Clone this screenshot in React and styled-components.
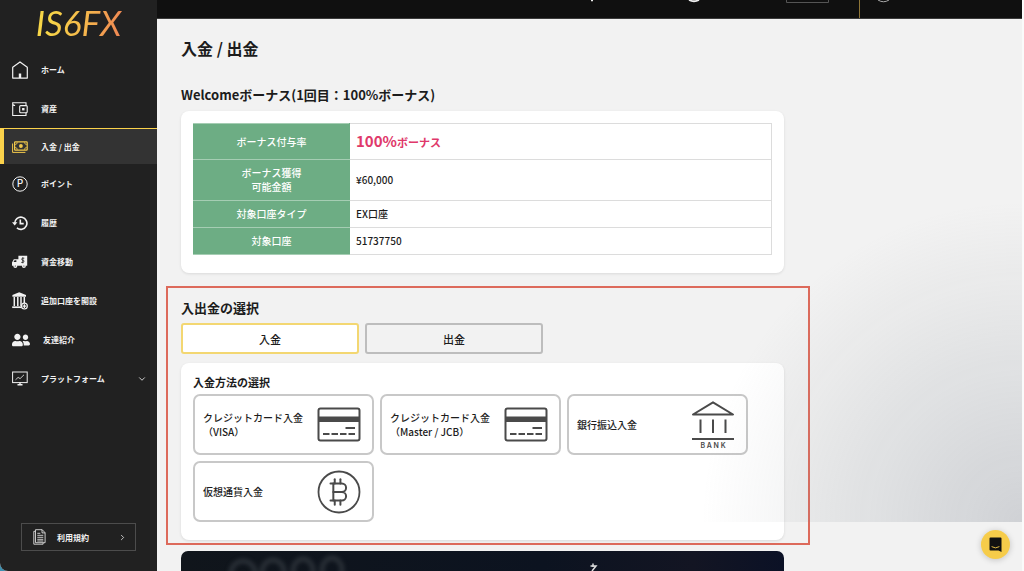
import React, { useState } from 'react'
import styled, { createGlobalStyle } from 'styled-components'
import { FaUserFriends } from 'react-icons/fa'
import { TbCurrencyBitcoin } from 'react-icons/tb'
import { ChevronDown, ChevronRight } from 'lucide-react'

const GlobalStyle = createGlobalStyle`
  * {
    box-sizing: border-box;
  }

  body {
    margin: 0;
    background: #3d8fb0;
    color: #1c1c1c;
    font-family: 'Noto Sans CJK JP', 'Noto Sans', sans-serif;
    font-size: 10px;
    line-height: 14px;
  }

  button {
    font-family: inherit;
    color: inherit;
    cursor: pointer;
  }
`

const Page = styled.div`
  display: flex;
  height: 100vh;
  overflow: hidden;
  border-bottom-left-radius: 8px;
  background: #f2f2f2;
`

const Sidebar = styled.aside`
  display: flex;
  flex-direction: column;
  flex: 0 0 157px;
  padding-bottom: 20px;
  background: #212121;
  color: #f2f2f2;
`

const Logo = styled.a`
  align-self: center;
  height: 50px;
  padding: 0 4px;
  font-family: Lato, sans-serif;
  font-size: 35px;
  font-style: italic;
  font-weight: 400;
  line-height: 44px;
  text-decoration: none;
  color: transparent;
  background: linear-gradient(100deg, #f7d648 20%, #f5b84c 55%, #ee7d55 100%);
  background-clip: text;
`

const NavLink = styled.a`
  display: flex;
  align-items: center;
  gap: 13px;
  height: ${ props => props.$active ? '36px' : '39px' };
  padding: 0 10px 0 ${ props => props.$active ? '8px' : '12px' };
  border: 0 solid #fbd24b;
  border-width: ${ props => props.$active ? '1px 0 0 4px' : '0' };
  background: ${ props => props.$active ? '#333' : 'transparent' };
  color: inherit;
  font-size: 8px;
  font-weight: 700;
  text-decoration: none;

  svg {
    flex: none;
  }
`

const NavText = styled.span`
  flex: 1;
`

const TermsButton = styled.button`
  display: flex;
  align-items: center;
  gap: 11px;
  height: 28px;
  margin: auto 21px 0;
  padding: 0 8px 0 11px;
  border: 1px solid #4c4c4c;
  background: transparent;
  color: #f2f2f2;
  font-size: 8px;
  font-weight: 700;
`

const TermsText = styled.span`
  flex: 1;
  text-align: left;
`

const Main = styled.main`
  flex: 1;
  min-width: 0;
  border-right: 2px solid #fafafa;
`

const TopBar = styled.header`
  display: flex;
  justify-content: flex-end;
  height: 19px;
  background: #101010;
  border-bottom: 1px solid #3c3c3c;

  svg {
    display: block;
  }
`

const Account = styled.div`
  width: 163px;
  border-left: 1px solid #8f7638;
`

const Content = styled.div`
  max-width: 651px;
  padding: 17px 24px 0;
`

const PageTitle = styled.h1`
  margin: 0 0 25px;
  font-size: 16px;
  line-height: 24px;
`

const SectionTitle = styled.h2`
  margin: 0 0 ${ props => props.$tight ? '5px' : '6px' };
  font-size: 13px;
  line-height: 20px;
`

const CardTitle = styled.h3`
  margin: 0 0 4px;
  font-size: 11px;
  line-height: 15px;
`

const Card = styled.div`
  padding: 12px 12px 18px;
  border-radius: 8px;
  background: #fff;
  box-shadow: 0 1px 3px rgba(0, 0, 0, 0.1);
`

const BonusTable = styled.table`
  width: 100%;
  border-collapse: collapse;

  th,
  td {
    padding: 6px;
    border: 1px solid #dcdcdc;
  }

  th {
    width: 156px;
    border-color: #a5cdb3 #6dad84;
    background: #6dad84;
    color: #fff;
    font-weight: 500;
  }

  td {
    font-weight: 500;
  }
`

const Rate = styled.strong`
  display: flex;
  align-items: baseline;
  color: #e0386a;
  font-size: 11px;
  line-height: 21px;
`

const RateNumber = styled.span`
  font-size: 15px;
`

const Highlight = styled.section`
  margin: 13px -26px 6px -15px;
  padding: 10px 24px 3px 13px;
  border: 2px solid #dd6a5b;
`

const Tabs = styled.div`
  display: flex;
  gap: 6px;
  margin-bottom: 9px;
`

const Tab = styled.button`
  width: 178px;
  height: 31px;
  padding: 0;
  border: 2px solid ${ props => props.$selected ? '#f3d772' : '#bdbdbd' };
  border-radius: 3px;
  background: ${ props => props.$selected ? '#fff' : '#f2f2f2' };
  font-size: 11px;
  font-weight: 500;
`

const Methods = styled.div`
  display: flex;
  flex-wrap: wrap;
  gap: 6px;
`

const Method = styled.button`
  display: flex;
  align-items: center;
  justify-content: space-between;
  width: 181px;
  height: 61px;
  padding: 0 11px 0 8px;
  border: 2px solid #c8c8c8;
  border-radius: 7px;
  background: transparent;
  font-size: 10px;
  font-weight: 500;
  line-height: 14px;
  text-align: left;
  white-space: pre-line;
`

const Banner = styled.div`
  height: 120px;
  border-radius: 7px;
  background: linear-gradient(90deg, #10151b, #0c1320 60%, #131523 85%, #0b1126);
`

const Shade = styled.div`
  position: fixed;
  right: 2px;
  bottom: 49px;
  width: 320px;
  height: 320px;
  background: radial-gradient(
    farthest-side at bottom right,
    rgba(110, 118, 132, 0.26),
    rgba(120, 130, 140, 0.14) 50%,
    rgba(140, 146, 150, 0.08) 75%,
    rgba(140, 146, 150, 0)
  );
  pointer-events: none;
`

const ChatButton = styled.button`
  position: fixed;
  right: 14px;
  bottom: 12px;
  display: flex;
  align-items: center;
  justify-content: center;
  width: 29px;
  height: 29px;
  padding: 0;
  border: 0;
  border-radius: 50%;
  background: #f6cc4a;
  box-shadow: 0 1px 6px rgba(0, 0, 0, 0.2);
`

const HomeIcon = () => (
  <svg width="16" height="18" viewBox="0 0 16 18" fill="none" stroke="currentColor" strokeWidth="1.2">
    <path d="M.7 6.2 8 .9l7.3 5.3v10.900H.7z" strokeLinejoin="round" />
    <path d="M8 17v-4.500" strokeWidth="2.400" />
  </svg>
)

const WalletIcon = () => (
  <svg width="16" height="16" viewBox="0 0 16 16" fill="none" stroke="currentColor" strokeWidth="1.100">
    <path d="M14 4.600V1.700H.7v12.800H14v-2.700M.7 2.200c0 1.600.9 2.300 2.400 2.300" />
    <rect x="7.700" y="4.600" width="7.500" height="7.200" rx="1" />
    <rect x="10.100" y="7" width="2.400" height="2.400" fill="currentColor" stroke="none" />
  </svg>
)

const CashIcon = () => (
  <svg width="16" height="12" viewBox="0 0 16 12" fill="none" stroke="#f2c94b">
    <path d="M.6 2.500v8.900h12.800" />
    <rect x="2.600" y=".8" width="12.600" height="8.400" rx=".8" strokeWidth="1.200" />
    <path d="M3.200 3.400c1.300 0 2-.8 2-2M14.600 3.400c-1.300 0-2-.8-2-2M3.200 6.600c1.300 0 2 .8 2 2M14.600 6.600c-1.300 0-2 .8-2 2" />
    <circle cx="8.900" cy="5" r="1.900" fill="#f2c94b" stroke="none" />
  </svg>
)

const PointIcon = () => (
  <svg width="16" height="16" viewBox="0 0 16 16" fill="none">
    <circle cx="8" cy="8" r="7.200" stroke="currentColor" />
    <text x="8" y="11.400" textAnchor="middle" fontSize="10" fontWeight="500" fill="currentColor">P</text>
  </svg>
)

const HistoryIcon = () => (
  <svg width="16" height="16" viewBox="0 0 16 16" fill="none" stroke="currentColor" strokeWidth="1.600">
    <path d="M2.700 8.400a6.100 6.100 0 1 1 2.200 4.500" />
    <path d="M0 7.200h5.400L2.700 10.400z" fill="currentColor" stroke="none" />
    <path d="M8.300 4.600v4h3.400" />
  </svg>
)

const TruckIcon = () => (
  <svg width="16" height="14" viewBox="0 0 16 14" fill="currentColor">
    <path d="M6.400.8h8.800v10H6.400zM0 7.400l1.800-3.200h4.800v6.600H0z" />
    <path d="M1.500 7.100 2.600 5.200h1.800v1.900z" fill="#212121" />
    <path d="M12.300 3.200H10.400c-.9 0-.9 2 0 2h.8c1 0 1 2.200 0 2.200H9.200M10.800 2.300v6" fill="none" stroke="#212121" strokeWidth=".8" />
    <circle cx="3.300" cy="11" r="2" />
    <circle cx="11.900" cy="11" r="2" />
    <circle cx="3.300" cy="11" r=".6" fill="#212121" />
    <circle cx="11.900" cy="11" r=".6" fill="#212121" />
  </svg>
)

const AddAccountIcon = () => (
  <svg width="16" height="18" viewBox="0 0 16 18" fill="none" stroke="currentColor">
    <path d="M.4 4.700v-1.600L7.200.2 14 3.100v1.600z" fill="currentColor" stroke="none" />
    <path d="M2.300 5v9M5.800 5v9M9 5v9M12.300 5v6" strokeWidth="1.500" />
    <path d="M.2 15.200h9.600" strokeWidth="1.700" />
    <circle cx="12.400" cy="14.100" r="2.900" fill="#212121" strokeWidth="1.200" />
    <path d="M12.400 12.300v3.600M10.600 14.100h3.600" strokeWidth="1.200" />
  </svg>
)

const PlatformIcon = () => (
  <svg width="16" height="15" viewBox="0 0 16 15" fill="none" stroke="currentColor">
    <rect x=".6" y="1" width="14.600" height="10.600" />
    <path d="m3.500 8.800 2.600-2.400 2 1.200 3.900-3.800" strokeWidth=".8" />
    <path d="M8 11.500v2M5.500 13.800h5" strokeWidth="1.400" />
  </svg>
)

const TermsIcon = () => (
  <svg width="13" height="16" viewBox="0 0 13 16" fill="none" stroke="currentColor" strokeWidth=".8">
    <path d="M2.200 2.300H.8v12.900h9.300v-1.400" />
    <path d="M2.500.7h6.700l2.900 3v10H2.500zM9 .8v3.100h3" />
    <path d="M4.300 4.300h3M4.300 6.300h6M4.300 8.300h6M4.300 10.300h6M4.300 12h6" />
  </svg>
)

const CardIcon = () => (
  <svg width="44" height="36" viewBox="0 0 44 36" fill="none" stroke="#4a4a4a" strokeWidth="2">
    <rect x="1.500" y="1.500" width="41" height="32" rx="2" />
    <path d="M1.500 12.300h41" strokeWidth="5.400" />
    <path d="M28.500 20.900h9.500M6 27h6.500M14.500 27H21M23 27h6.500M31.500 27H38" />
  </svg>
)

const BankIcon = () => (
  <svg width="44" height="50" viewBox="0 0 44 50" fill="none" stroke="#4a4a4a" strokeWidth="2">
    <path d="M2 14.500 22 2.300l20 12.200z" strokeLinejoin="round" />
    <path d="M9.500 19.500V33M22 19.500V33M34.500 19.500V33M1 39h42" />
    <text x="22" y="48" textAnchor="middle" fontFamily="Inter, sans-serif" fontSize="7" fontWeight="600" fill="#4a4a4a" stroke="none">B A N K</text>
  </svg>
)

const BitcoinIcon = () => (
  <svg width="44" height="44" viewBox="0 0 44 44" fill="none">
    <circle cx="22" cy="22" r="20.500" stroke="#4a4a4a" strokeWidth="1.800" />
    <TbCurrencyBitcoin x="5" y="5" size="34" color="#4a4a4a" strokeWidth="1.400" />
  </svg>
)

const ChatIcon = () => (
  <svg width="13" height="15" viewBox="0 0 13 15" fill="none">
    <path d="M1.500.5h10q1 0 1 1V15l-3-1.500h-8q-1 0-1-1v-11q0-1 1-1z" fill="#111" />
    <path d="M2.600 9.600q3.900 2.600 7.800 0" stroke="#f6cc4a" strokeWidth=".9" />
  </svg>
)

const navItems = [
  { label: 'ホーム', icon: <HomeIcon /> },
  { label: '資産', icon: <WalletIcon /> },
  { label: '入金 / 出金', icon: <CashIcon />, active: true },
  { label: 'ポイント', icon: <PointIcon /> },
  { label: '履歴', icon: <HistoryIcon /> },
  { label: '資金移動', icon: <TruckIcon /> },
  { label: '追加口座を開設', icon: <AddAccountIcon /> },
  { label: '友達紹介', icon: <FaUserFriends size={18} /> },
  { label: 'プラットフォーム', icon: <PlatformIcon />, expandable: true },
]

const methods = [
  { label: 'クレジットカード入金\n（VISA）', icon: <CardIcon /> },
  { label: 'クレジットカード入金\n（Master / JCB）', icon: <CardIcon /> },
  { label: '銀行振込入金', icon: <BankIcon /> },
  { label: '仮想通貨入金', icon: <BitcoinIcon /> },
]

const App = () => {
  const [tab, setTab] = useState('入金')

  const renderNav = () => {
    return navItems.map(item => (
      <NavLink key={item.label} href="#" $active={item.active}>
        {item.icon}
        <NavText>{item.label}</NavText>
        {item.expandable && <ChevronDown size={10} strokeWidth={2} />}
      </NavLink>
    ))
  }

  const renderBonus = () => {
    return (
      <Card>
        <BonusTable>
          <tbody>
            <tr>
              <th scope="row">ボーナス付与率</th>
              <td><Rate><RateNumber>100%</RateNumber>ボーナス</Rate></td>
            </tr>
            <tr>
              <th scope="row">ボーナス獲得<br />可能金額</th>
              <td>¥60,000</td>
            </tr>
            <tr>
              <th scope="row">対象口座タイプ</th>
              <td>EX口座</td>
            </tr>
            <tr>
              <th scope="row">対象口座</th>
              <td>51737750</td>
            </tr>
          </tbody>
        </BonusTable>
      </Card>
    )
  }

  return (
    <>
      <GlobalStyle />
      <Page>
        <Sidebar>
          <Logo href="#">IS6FX</Logo>
          <nav>{ renderNav() }</nav>
          <TermsButton>
            <TermsIcon />
            <TermsText>利用規約</TermsText>
            <ChevronRight size={9} />
          </TermsButton>
        </Sidebar>
        <Main>
          <TopBar>
            <svg width="280" height="4" viewBox="0 0 280 4" fill="none">
              <path d="M13 0v1.200" stroke="#eee" strokeWidth="2" />
              <path d="M110 0q5 2.500 10 0" stroke="#eee" strokeWidth="1.800" />
              <path d="M207.500 0v2.500h42V0" stroke="#555" />
            </svg>
            <Account>
              <svg width="40" height="4" viewBox="0 0 40 4" fill="none">
                <path d="M18 0q5.500 3.500 11 0" stroke="#aaa" />
              </svg>
            </Account>
          </TopBar>
          <Content>
            <PageTitle>入金 / 出金</PageTitle>
            <SectionTitle>Welcomeボーナス(1回目：100%ボーナス)</SectionTitle>
            { renderBonus() }
            <Highlight>
              <SectionTitle $tight>入出金の選択</SectionTitle>
              <Tabs>
                {['入金', '出金'].map(name => (
                  <Tab key={name} $selected={tab === name} onClick={() => setTab(name)}>{name}</Tab>
                ))}
              </Tabs>
              <Card>
                <CardTitle>入金方法の選択</CardTitle>
                <Methods>
                  {methods.map(method => (
                    <Method key={method.label}>
                      {method.label}
                      {method.icon}
                    </Method>
                  ))}
                </Methods>
              </Card>
            </Highlight>
            <Banner>
              <svg width="420" height="20" viewBox="0 0 420 20" fill="none">
                <g stroke="#30363d" strokeWidth="5" opacity=".8" style={{ filter: 'blur(2px)' }}>
                  <ellipse cx="62" cy="22" rx="12" ry="12" />
                  <ellipse cx="92" cy="21" rx="11" ry="12" />
                  <ellipse cx="122" cy="20" rx="10" ry="12" />
                  <ellipse cx="151" cy="19" rx="10" ry="12" />
                </g>
                <path d="M409.500 15h5.500l-4 5M412 12.500v3.500" stroke="#ddd" strokeWidth="1.500" />
              </svg>
            </Banner>
          </Content>
        </Main>
      </Page>
      <Shade />
      <ChatButton aria-label="チャット">
        <ChatIcon />
      </ChatButton>
    </>
  )
}

export default App
